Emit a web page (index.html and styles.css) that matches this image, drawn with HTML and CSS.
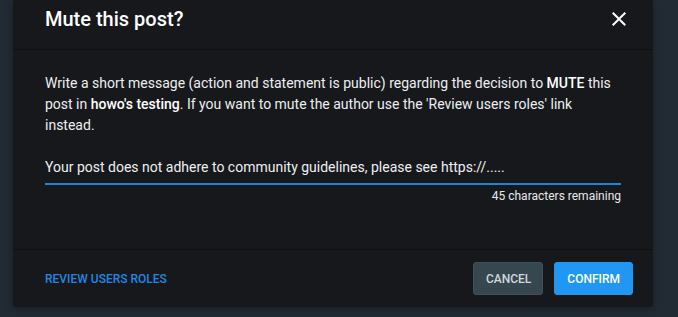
FILE: index.html
```html
<!DOCTYPE html>
<html lang="en">
<head>
    <meta charset="UTF-8">
    <meta name="viewport" content="width=device-width, initial-scale=1.0">
    <title>Mute this post?</title>
    <link rel="stylesheet" href="styles.css">
</head>
<body>
    <div class="backdrop">
        <div class="dialog">
            <div class="dialog-header">
                <h2>Mute this post?</h2>
                <button type="button" class="close-btn" aria-label="Close">
                    <svg width="24" height="24" viewBox="0 0 24 24"><path fill="currentColor" d="M19 6.41L17.59 5 12 10.59 6.41 5 5 6.41 10.59 12 5 17.59 6.41 19 12 13.41 17.59 19 19 17.59 13.41 12z"/></svg>
                </button>
            </div>
            <div class="dialog-body">
                <p>Write a short message (action and statement is public) regarding the decision to <b>MUTE</b> this post in <b>howo's testing</b>. If you want to mute the author use the 'Review users roles' link instead.</p>
                <input type="text" class="reason" value="Your post does not adhere to community guidelines, please see https://.....">
                <div class="counter">45 characters remaining</div>
            </div>
            <div class="dialog-footer">
                <a href="#" class="review-link">REVIEW USERS ROLES</a>
                <div class="btn-container">
                    <button type="button" class="cancel-btn">CANCEL</button>
                    <button type="button" class="confirm-btn">CONFIRM</button>
                </div>
            </div>
        </div>
    </div>
</body>
</html>
```

FILE: styles.css
```css
body{
    margin: 0;
    background-color: #222a33;
    font-family: Roboto, "Liberation Sans", sans-serif;
    overflow: hidden;
}
.backdrop{
    padding-left: 13px;
    height: 317px;
}
.dialog{
    width: 640px;
    background-color: #17181b;
    border-radius: 0 0 3px 3px;
    box-shadow: 0 2px 8px rgba(0, 0, 0, 0.3);
}
.dialog-header{
    display: flex;
    justify-content: space-between;
    align-items: center;
    padding: 7px 22px 18px 32px;
    border-bottom: 1px solid #0f1012;
}
.dialog-header h2{
    margin: 0;
    font-size: 20px;
    line-height: 24px;
    font-weight: 500;
    color: #ffffff;
}
.close-btn{
    background: none;
    border: none;
    padding: 0;
    width: 24px;
    height: 24px;
    color: #ffffff;
}
.close-btn svg{
    display: block;
}
.dialog-body{
    padding: 23px 32px 45px 32px;
    border-bottom: 1px solid #0f1012;
}
.dialog-body p{
    margin: 0 0 15px 0;
    font-size: 14px;
    line-height: 21px;
    color: #eceff1;
}
.dialog-body b{
    font-weight: 500;
    color: #ffffff;
}
.reason{
    display: block;
    box-sizing: border-box;
    width: 100%;
    height: 34px;
    padding: 0;
    margin: 0;
    border: none;
    border-bottom: 2px solid #1b87d6;
    background: transparent;
    font-family: inherit;
    font-size: 14px;
    color: #eceff1;
    outline: none;
}
.counter{
    margin-top: 3px;
    text-align: right;
    font-size: 12px;
    line-height: 16px;
    color: #e6eaed;
}
.dialog-footer{
    display: flex;
    justify-content: space-between;
    align-items: center;
    padding: 12px 20px 12px 32px;
}
.review-link{
    font-size: 12px;
    font-weight: 500;
    color: #1e88e5;
    text-decoration: none;
}
.btn-container{
    display: flex;
    gap: 11px;
}
.btn-container button{
    height: 33px;
    border-radius: 3px;
    font-family: inherit;
    font-size: 12px;
    font-weight: 500;
}
.cancel-btn{
    padding: 0 11px 0 12px;
    background-color: #37474f;
    border: 1px solid #3f5058;
    color: #cfd8dc;
}
.confirm-btn{
    padding: 0 12px;
    background-color: #2196f3;
    border: 1px solid #2196f3;
    color: #ffffff;
}
```
